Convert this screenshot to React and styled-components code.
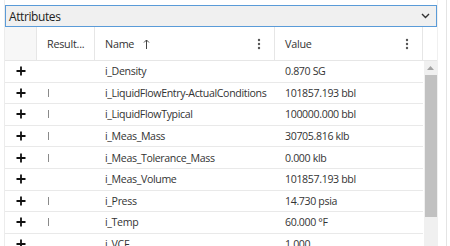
import React from "react";
import styled, { createGlobalStyle } from "styled-components";

const Global = createGlobalStyle`
  html, body { margin: 0; padding: 0; background: #fff; }
  body { font-family: "Open Sans", "Noto Sans", "Liberation Sans", sans-serif; color: #333; overflow: hidden; }
`;

const Page = styled.div`
  width: 450px;
  height: 246px;
  overflow: hidden;
  display: flex;
  box-sizing: border-box;
`;

const LeftEdge = styled.div`
  width: 4px;
  border-right: 1px solid #ececec;
  flex: none;
`;

const Panel = styled.div`
  width: 432px;
  padding-top: 5px;
  display: flex;
  flex-direction: column;
  flex: none;
`;

const RightEdge = styled.div`
  width: 8px;
  border-left: 1px solid #f0f0f0;
  border-right: 1px solid #e4e4e4;
  flex: none;
`;

const Select = styled.div`
  height: 22px;
  box-sizing: border-box;
  border: 1px solid #5a9bd8;
  background: #f0f0f0;
  display: flex;
  align-items: center;
  justify-content: space-between;
  padding: 0 6px 0 3px;
  font-size: 12px;
  letter-spacing: -0.4px;
  color: #222;
`;

const Grid = styled.div`
  display: flex;
  flex-direction: column;
`;

const HeaderRow = styled.div`
  display: grid;
  grid-template-columns: 32px 58px 180px 148px 14px;
  height: 34px;
  border-bottom: 1px solid #e6e6e6;
  box-sizing: border-box;
`;

const HeadCell = styled.div`
  display: flex;
  align-items: center;
  justify-content: space-between;
  padding: 0 ${p => p.$pr || 10}px 0 ${p => p.$pl || 10}px;
  font-size: 10.8px;
  letter-spacing: -0.25px;
  color: #333;
  background: ${p => (p.$shade ? "#f7f7f7" : "#fff")};
  border-right: ${p => (p.$noBorder ? "none" : "1px solid #e6e6e6")};
  white-space: nowrap;
  overflow: hidden;
`;

const HeadLabel = styled.span`
  display: flex;
  align-items: center;
  gap: 9px;
`;

const Body = styled.div`
  display: flex;
  height: 185px;
  overflow: hidden;
`;

const Rows = styled.div`
  width: 418px;
  flex: none;
`;

const Row = styled.div`
  display: grid;
  grid-template-columns: 32px 58px 180px 148px;
  height: 21.6px;
  border-bottom: 1px solid #e9e9e9;
  box-sizing: border-box;
  align-items: center;
  font-size: 10.6px;
  letter-spacing: -0.35px;
  color: #333;
`;

const Cell = styled.div`
  padding-left: ${p => p.$pl || 10}px;
  white-space: nowrap;
  overflow: hidden;
  display: flex;
  align-items: center;
`;

const Bar = styled.span`
  display: block;
  width: 1px;
  height: 8px;
  background: #8a8a8a;
`;

const Scroll = styled.div`
  width: 14px;
  flex: none;
  background: #f0f0f0;
  display: flex;
  flex-direction: column;
  align-items: center;
  border-left: 1px solid #fff;
  box-sizing: border-box;
`;

const ArrowUp = styled.div`
  height: 14px;
  display: flex;
  align-items: center;
  justify-content: center;
`;

const Thumb = styled.div`
  width: 12px;
  height: 142px;
  background: #c1c1c1;
`;

const Plus = () => (
  <svg width="10" height="10" viewBox="0 0 10 10">
    <path d="M5 0.5v9M0.5 5h9" stroke="#111" strokeWidth="1.8" />
  </svg>
);

const Kebab = () => (
  <svg width="4" height="12" viewBox="0 0 4 12">
    <circle cx="2" cy="2" r="1.2" fill="#555" />
    <circle cx="2" cy="6" r="1.2" fill="#555" />
    <circle cx="2" cy="10" r="1.2" fill="#555" />
  </svg>
);

const Chevron = () => (
  <svg width="9" height="6" viewBox="0 0 9 6">
    <path d="M1 1l3.5 3.5L8 1" stroke="#333" strokeWidth="1.4" fill="none" />
  </svg>
);

const SortUp = () => (
  <svg width="7" height="10" viewBox="0 0 7 10">
    <path d="M3.5 1v9M1 3.5l2.5-2.5L6 3.5" stroke="#444" strokeWidth="1" fill="none" />
  </svg>
);

const rows = [
  { bar: false, name: "i_Density", value: "0.870 SG" },
  { bar: true, name: "i_LiquidFlowEntry-ActualConditions", value: "101857.193 bbl" },
  { bar: true, name: "i_LiquidFlowTypical", value: "100000.000 bbl" },
  { bar: true, name: "i_Meas_Mass", value: "30705.816 klb" },
  { bar: true, name: "i_Meas_Tolerance_Mass", value: "0.000 klb" },
  { bar: false, name: "i_Meas_Volume", value: "101857.193 bbl" },
  { bar: true, name: "i_Press", value: "14.730 psia" },
  { bar: true, name: "i_Temp", value: "60.000 °F" },
  { bar: false, name: "i_VCF", value: "1.000" },
];

export default function App() {
  return (
    <>
      <Global />
      <Page>
        <LeftEdge />
        <Panel>
          <Select>
            <span>Attributes</span>
            <Chevron />
          </Select>
          <Grid>
            <HeaderRow>
              <HeadCell $shade />
              <HeadCell>Result...</HeadCell>
              <HeadCell $pr={13}>
                <HeadLabel>
                  Name <SortUp />
                </HeadLabel>
                <Kebab />
              </HeadCell>
              <HeadCell $pr={13}>
                <span>Value</span>
                <Kebab />
              </HeadCell>
              <HeadCell $noBorder />
            </HeaderRow>
            <Body>
              <Rows>
                {rows.map(r => (
                  <Row key={r.name}>
                    <Cell $pl={11}>
                      <Plus />
                    </Cell>
                    <Cell $pl={11}>{r.bar && <Bar />}</Cell>
                    <Cell>{r.name}</Cell>
                    <Cell>{r.value}</Cell>
                  </Row>
                ))}
              </Rows>
              <Scroll>
                <ArrowUp>
                  <svg width="7" height="4" viewBox="0 0 7 4">
                    <path d="M0 4L3.5 0L7 4Z" fill="#a3a3a3" />
                  </svg>
                </ArrowUp>
                <Thumb />
              </Scroll>
            </Body>
          </Grid>
        </Panel>
        <RightEdge />
      </Page>
    </>
  );
}
